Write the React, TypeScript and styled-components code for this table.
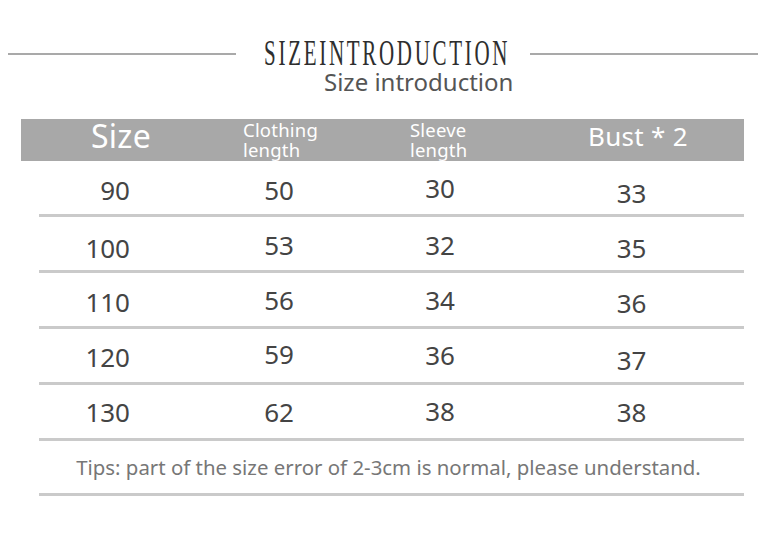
import React from 'react';
import styled, { createGlobalStyle } from "styled-components";

const GlobalStyle = createGlobalStyle`
  body {
    margin: 0;
    background: #ffffff;
    font-family: "Noto Sans", "Noto Sans CJK SC", sans-serif;
  }
`;

const Page = styled.div`
  width: 765px;
  height: 539px;
  overflow: hidden;
  background: #ffffff;
  padding-top: 39px;
  box-sizing: border-box;
`;

const TitleRow = styled.div`
  display: flex;
  align-items: center;
  height: 30px;
  padding: 0 7px 0 8px;
`;

const Rule = styled.div`
  flex: 1;
  height: 2px;
  background: #a9a9a9;
`;

const TitleBox = styled.div`
  width: 294px;
  height: 30px;
  display: flex;
  justify-content: center;
  align-items: center;
`;

const Title = styled.span`
  display: inline-block;
  font-family: "Liberation Serif", serif;
  font-size: 35px;
  line-height: 30px;
  letter-spacing: 4.5px;
  color: #2e2e2e;
  transform: scaleX(0.6);
  margin-left: 8px;
  white-space: nowrap;
`;

const Subtitle = styled.div`
  padding-left: 324px;
  margin-top: -1px;
  font-size: 24px;
  line-height: 28px;
  color: #555555;
`;

const HeaderBar = styled.div`
  margin: 23px 0 0 21px;
  width: 723px;
  height: 42px;
  background: #a8a8a8;
  display: grid;
  grid-template-columns: 200px 167px 178px 1fr;
  align-items: center;
  color: #ffffff;
`;

const HeadCell = styled.div<{ $center?: boolean; $size?: number }>`
  text-align: ${p => (p.$center ? "center" : "left")};
  padding-left: ${p => (p.$center ? "0" : "22px")};
  font-size: ${p => p.$size || 18.5}px;
  line-height: ${p => (p.$size ? "1" : "20px")};
  letter-spacing: ${p => (p.$size ? "0.3px" : "0.2px")};
  margin-top: ${p => (p.$size ? "-8px" : "0")};
`;

const Table = styled.div`
  margin-left: 39px;
  width: 705px;
`;

const Row = styled.div`
  display: grid;
  grid-template-columns: 152px 176px 146px 1fr;
  height: 53px;
  align-items: center;
  border-bottom: 3px solid #cacaca;
`;

const Cell = styled.div<{ $first?: boolean; $last?: boolean }>`
  font-size: 26px;
  line-height: 26px;
  color: #444444;
  text-align: ${p => (p.$first ? "right" : "center")};
  padding-right: ${p => (p.$first ? "61px" : "0")};
  padding-left: ${p => (p.$last ? "6px" : "0")};
`;

const Tips = styled.div`
  display: flex;
  align-items: center;
  justify-content: center;
  border-bottom: 3px solid #cacaca;
  font-size: 20.4px;
  color: #777777;
  padding-right: 6px;
  box-sizing: border-box;
  height: 55px;
`;

const rows = [
  { values: ["90", "50", "30", "33"], dy: [2, 2, 0, 5] },
  { values: ["100", "53", "32", "35"], dy: [4, 1, 1, 4] },
  { values: ["110", "56", "34", "36"], dy: [2, 0, 0, 3] },
  { values: ["120", "59", "36", "37"], dy: [1, -2, -1, 4] },
  { values: ["130", "62", "38", "38"], dy: [0, 0, -1, 0] },
];

const App = () => {
  return (
    <>
      <GlobalStyle />
      <Page>
        <TitleRow>
          <Rule />
          <TitleBox>
            <Title>SIZEINTRODUCTION</Title>
          </TitleBox>
          <Rule />
        </TitleRow>
        <Subtitle>Size introduction</Subtitle>

        <HeaderBar>
          <HeadCell $center $size={32}>Size</HeadCell>
          <HeadCell>Clothing<br />length</HeadCell>
          <HeadCell>Sleeve<br />length</HeadCell>
          <HeadCell $size={26}>Bust * 2</HeadCell>
        </HeaderBar>

        <Table>
          {rows.map(row => (
            <Row key={row.values[0]}>
              {row.values.map((v, i) => (
                <Cell
                  key={i}
                  $first={i === 0}
                  $last={i === 3}
                  style={{ transform: `translateY(${row.dy[i]}px)` }}
                >
                  {v}
                </Cell>
              ))}
            </Row>
          ))}
          <Tips>Tips: part of the size error of 2-3cm is normal, please understand.</Tips>
        </Table>
      </Page>
    </>
  );
};

export default App;
